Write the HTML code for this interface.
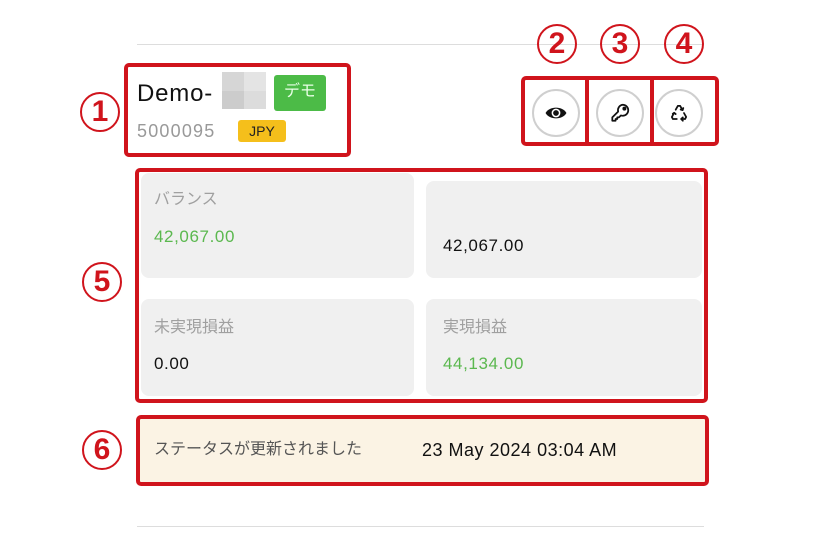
<!DOCTYPE html>
<html><head><meta charset="utf-8"><style>
*{margin:0;padding:0;box-sizing:border-box}
body{width:840px;height:560px;background:#fff;position:relative;overflow:hidden;font-family:"Liberation Sans","Noto Sans CJK JP",sans-serif}
.a{position:absolute;line-height:20px;white-space:nowrap}
.red{border:4px solid #d0141c;border-radius:5px}
.num{position:absolute;width:40px;height:40px;border:2px solid #d0141c;border-radius:50%;color:#d0141c;font-size:30px;line-height:36px;font-weight:bold;text-align:center;font-family:"Liberation Sans",sans-serif}
.card{position:absolute;background:#f0f0f0;border-radius:8px}
.lbl{position:absolute;color:#a0a0a0;font-size:16px;line-height:20px}
.val{position:absolute;font-size:17px;line-height:20px;letter-spacing:0.6px}
.circ{position:absolute;width:48px;height:48px;border:2.5px solid #cfcfcf;border-radius:50%;display:flex;align-items:center;justify-content:center}
</style></head><body>
<div class="a" style="left:137px;top:44px;width:566px;height:1px;background:#ddd"></div>
<div class="a" style="left:137px;top:526px;width:567px;height:1px;background:#ddd"></div>

<div class="num" style="left:80px;top:92px">1</div>
<div class="num" style="left:537px;top:24px">2</div>
<div class="num" style="left:600px;top:24px">3</div>
<div class="num" style="left:664px;top:24px">4</div>
<div class="num" style="left:82px;top:262px">5</div>
<div class="num" style="left:82px;top:430px">6</div>

<div class="a red" style="left:124px;top:63px;width:227px;height:94px"></div>
<div class="a" style="left:137px;top:82px;font-size:24px;line-height:24px;font-weight:500;color:#111;letter-spacing:0.8px">Demo-</div>
<div class="a" style="left:222px;top:72px;width:22px;height:19px;background:#d6d6d6"></div>
<div class="a" style="left:244px;top:72px;width:22px;height:19px;background:#e4e4e4"></div>
<div class="a" style="left:222px;top:91px;width:22px;height:18px;background:#cccccc"></div>
<div class="a" style="left:244px;top:91px;width:22px;height:18px;background:#dcdcdc"></div>
<div class="a" style="left:274px;top:75px;width:52px;height:36px;background:#4cbb47;border-radius:3px;color:#e8ffe6;font-size:16px;text-align:center;line-height:34px">デモ</div>
<div class="a" style="left:137px;top:121px;font-size:18px;color:#999;letter-spacing:1.2px">5000095</div>
<div class="a" style="left:238px;top:120px;width:48px;height:22px;background:#f5bf1b;border-radius:3px;font-size:14px;text-align:center;line-height:22px;color:#222">JPY</div>

<div class="a red" style="left:521px;top:76px;width:198px;height:70px"></div>
<div class="a" style="left:585px;top:76px;width:4px;height:70px;background:#d0141c"></div>
<div class="a" style="left:650px;top:76px;width:4px;height:70px;background:#d0141c"></div>
<div class="circ" style="left:532px;top:89px"><svg width="22" height="16" viewBox="0 0 20 14"><path d="M0.5 7C4 0.5 16 0.5 19.5 7C16 13.5 4 13.5 0.5 7Z" fill="#111"/><circle cx="10" cy="7" r="4" fill="#fff"/><circle cx="10" cy="7" r="2.6" fill="#111"/></svg></div>
<div class="circ" style="left:596px;top:89px"><svg width="22" height="22" viewBox="0 0 20 20" fill="none" stroke="#111" stroke-width="1.6" stroke-linejoin="round"><path d="M12.5 2.5a5 5 0 0 1 0 10c-.6 0-1.1-.1-1.6-.3L9 14H7.5v1.5H6V17H3v-3l5.3-5.3A5 5 0 0 1 12.5 2.5Z"/><circle cx="14" cy="6" r="1" fill="#111"/></svg></div>
<div class="circ" style="left:655px;top:89px"><svg width="22" height="22" viewBox="0 0 20 20" fill="none" stroke="#111" stroke-width="1.6" stroke-linecap="round" stroke-linejoin="round"><path d="M7 7L9 3.5h2l2.2 3.8"/><path d="M11.5 6.8l1.8.6.6-1.9"/><path d="M14.5 10l2 3.6-1 1.9h-3.5"/><path d="M13.5 14l-1.5 1.5 1.5 1.5"/><path d="M8 15.5H4.5l-1-1.8L5.5 10"/><path d="M4.3 10.8l1.3-1 1.4 1.2"/></svg></div>

<div class="a red" style="left:135px;top:168px;width:573px;height:235px"></div>
<div class="card" style="left:141px;top:173px;width:273px;height:105px"></div>
<div class="card" style="left:426px;top:181px;width:276px;height:97px"></div>
<div class="card" style="left:141px;top:299px;width:273px;height:97px"></div>
<div class="card" style="left:426px;top:299px;width:276px;height:97px"></div>
<div class="lbl" style="left:154px;top:190px">バランス</div>
<div class="val" style="left:154px;top:227px;color:#5bb84f">42,067.00</div>
<div class="val" style="left:443px;top:236px;color:#111">42,067.00</div>
<div class="lbl" style="left:154px;top:318px">未実現損益</div>
<div class="val" style="left:154px;top:354px;color:#111">0.00</div>
<div class="lbl" style="left:443px;top:318px">実現損益</div>
<div class="val" style="left:443px;top:354px;color:#5bb84f">44,134.00</div>

<div class="a red" style="left:136px;top:415px;width:573px;height:71px;background:#fbf3e4"></div>
<div class="a" style="left:154px;top:440px;font-size:16px;line-height:20px;color:#555">ステータスが更新されました</div>
<div class="a" style="left:422px;top:440px;font-size:18px;line-height:20px;font-weight:500;color:#111;letter-spacing:0.5px">23 May 2024 03:04 AM</div>
</body></html>
